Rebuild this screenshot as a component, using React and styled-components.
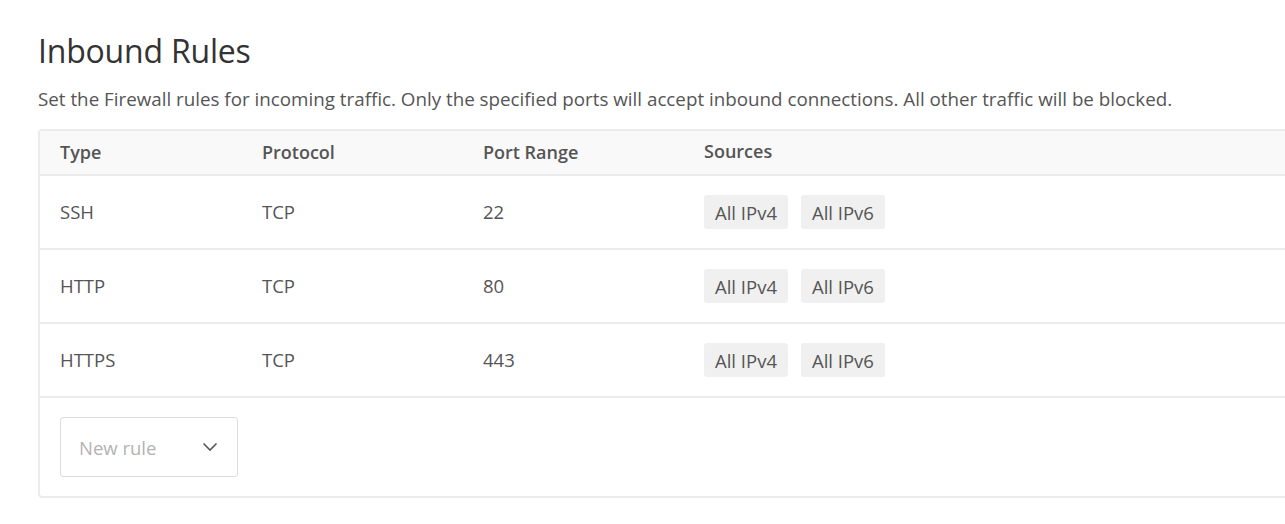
import styled, { createGlobalStyle } from 'styled-components';

const GlobalStyle = createGlobalStyle`
  html, body {
    margin: 0;
    padding: 0;
    background: #fff;
    overflow: hidden;
  }
  body {
    font-family: "Open Sans", "Noto Sans", sans-serif;
    color: #444;
  }
`;

const Page = styled.div`
  padding: 30px 0 0 38px;
`;

const Title = styled.h2`
  margin: 0;
  font-size: 32px;
  font-weight: 400;
  color: #333;
  line-height: 42px;
  letter-spacing: -0.2px;
`;

const Intro = styled.p`
  margin: 15px 0 18px;
  font-size: 18.8px;
  color: #555;
  line-height: 24px;
  white-space: nowrap;
`;

const Table = styled.div`
  width: 1300px;
  border: 2px solid #ececec;
  border-radius: 4px;
  overflow: hidden;
`;

const Row = styled.div`
  display: grid;
  grid-template-columns: 202px 221px 221px 1fr;
  align-items: center;
  height: ${({ $head }) => ($head ? '43px' : '72px')};
  padding-left: 20px;
  background: ${({ $head }) => ($head ? '#f9f9f9' : '#fff')};
  border-bottom: 2px solid #ececec;
  font-size: ${({ $head }) => ($head ? '18px' : '18.5px')};
  font-weight: ${({ $head }) => ($head ? 600 : 400)};
  color: #555;
`;

const Cell = styled.div`
  margin-top: ${({ $raise }) => ($raise ? '-4px' : '-2px')};
`;

const Chips = styled.div`
  display: flex;
  gap: 13px;
`;

const Chip = styled.span`
  display: inline-flex;
  align-items: center;
  height: 34px;
  padding: 0 11px;
  background: #f0f0f0;
  border-radius: 3px;
  font-size: 18.5px;
  color: #555;
`;

const Footer = styled.div`
  padding: 19px 20px 19px;
`;

const Select = styled.div`
  box-sizing: border-box;
  width: 178px;
  height: 60px;
  border: 1px solid #dcdcdc;
  border-radius: 3px;
  display: flex;
  align-items: center;
  justify-content: space-between;
  padding: 0 19px 0 18px;
  font-size: 18.5px;
  color: #b3b3b3;
`;

const Chevron = () => (
  <svg width="16" height="10" viewBox="0 0 16 10" fill="none">
    <polyline points="1.5,1.5 8,8 14.5,1.5" stroke="#555" strokeWidth="1.6" />
  </svg>
);

const rules = [
  { type: 'SSH', protocol: 'TCP', port: '22' },
  { type: 'HTTP', protocol: 'TCP', port: '80' },
  { type: 'HTTPS', protocol: 'TCP', port: '443' },
];

export default function App() {
  return (
    <Page>
      <GlobalStyle />
      <Title>Inbound Rules</Title>
      <Intro>
        Set the Firewall rules for incoming traffic. Only the specified ports will accept inbound connections. All other traffic will be blocked.
      </Intro>
      <Table>
        <Row $head>
          <Cell>Type</Cell>
          <Cell>Protocol</Cell>
          <Cell>Port Range</Cell>
          <Cell $raise>Sources</Cell>
        </Row>
        {rules.map((r) => (
          <Row key={r.type}>
            <Cell>{r.type}</Cell>
            <Cell>{r.protocol}</Cell>
            <Cell>{r.port}</Cell>
            <Chips>
              <Chip>All IPv4</Chip>
              <Chip>All IPv6</Chip>
            </Chips>
          </Row>
        ))}
        <Footer>
          <Select>
            <span>New rule</span>
            <Chevron />
          </Select>
        </Footer>
      </Table>
    </Page>
  );
}
